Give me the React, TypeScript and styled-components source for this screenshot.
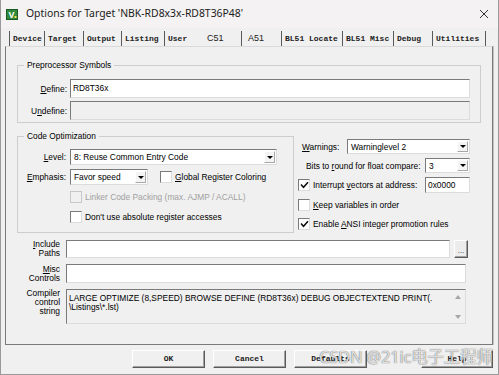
import React from 'react'
import styled, { createGlobalStyle } from 'styled-components'

const GlobalStyle = createGlobalStyle`
  html, body { margin: 0; padding: 0; background: #f0f0f0; }
  body { font-family: "Liberation Sans", Arial, sans-serif; color: #000; }
`

const Window = styled.div`
  position: relative;
  width: 499px;
  height: 375px;
  box-sizing: border-box;
  background: #f0f0f0;
  border-left: 1px solid #9a9a9a;
  border-right: 1px solid #9a9a9a;
  border-bottom: 1px solid #9a9a9a;
  display: flex;
  flex-direction: column;
  overflow: hidden;
`

const TitleBar = styled.div`
  height: 28px;
  flex-shrink: 0;
  display: flex;
  align-items: center;
  padding: 0 9px 0 5px;
  background: #f4f2f2;
  gap: 8px;
`

const TitleText = styled.span`
  flex: 1;
  font-family: "Noto Sans", "Liberation Sans", sans-serif;
  font-size: 10.4px;
  color: #1a1a1a;
  margin-top: -2px;
`

const TabStrip = styled.div`
  display: flex;
  height: 15px;
  margin-top: 3px;
  padding-left: 8px;
`

const Tab = styled.div<{ $w: number; $first?: boolean; $noEdge?: boolean; $plain?: boolean }>`
  width: ${p => p.$w}px;
  box-sizing: border-box;
  padding-left: ${p => (p.$plain ? 6 : 3)}px;
  border-left: ${p => (p.$first ? '1px solid #5a5a5a' : '0')};
  border-right: ${p => (p.$noEdge ? '0' : '1px solid #5a5a5a')};
  font-family: ${p => (p.$plain ? '"Liberation Sans", sans-serif' : '"Liberation Mono", monospace')};
  font-weight: ${p => (p.$plain ? 400 : 700)};
  font-size: ${p => (p.$plain ? '9px' : '8px')};
  line-height: 15px;
  color: #222;
  white-space: nowrap;
  overflow: hidden;
`

const Panel = styled.div`
  margin: 0 5px 0 4px;
  height: 299px;
  box-sizing: border-box;
  border: 1px solid #7a7a7a;
  border-top-color: #dadada;
  box-shadow: 1px 0 0 #c4c4c4;
  padding: 13px 11px 0 11px;
  display: flex;
  flex-direction: column;
`

const Group = styled.fieldset<{ $w?: number; $pad: string }>`
  margin: 0;
  min-width: 0;
  box-sizing: border-box;
  width: ${p => (p.$w ? `${p.$w}px` : 'auto')};
  border: 1px solid #cdcdcd;
  padding: ${p => p.$pad};
`

const Legend = styled.legend`
  margin-left: 6px;
  padding: 0 3px;
  font-size: 8.4px;
  line-height: 10px;
`

const FormGrid = styled.div<{ $cols: string; $gap: number; $rows?: string }>`
  display: grid;
  grid-template-columns: ${p => p.$cols};
  grid-auto-rows: ${p => p.$rows ?? 'auto'};
  column-gap: ${p => p.$gap}px;
  row-gap: ${p => p.$gap}px;
  align-items: center;
`

const Label = styled.span<{ $dim?: boolean; $indent?: number }>`
  font-size: 8.4px;
  line-height: 10px;
  text-align: right;
  white-space: nowrap;
  margin-left: ${p => p.$indent ?? 0}px;
  color: ${p => (p.$dim ? '#a0a0a0' : '#000')};
`

const StackLabel = styled.span<{ $top?: boolean }>`
  font-size: 8.4px;
  line-height: 9px;
  text-align: right;
  align-self: ${p => (p.$top ? 'start' : 'center')};
`

const U = styled.span`
  text-decoration: underline;
`

const Edit = styled.div<{ $h: number; $w?: number; $ro?: boolean }>`
  height: ${p => p.$h}px;
  width: ${p => (p.$w ? `${p.$w}px` : 'auto')};
  flex: ${p => (p.$w ? 'none' : '1')};
  box-sizing: border-box;
  background: ${p => (p.$ro ? '#f0f0f0' : '#fff')};
  border: 1px solid;
  border-color: #7a7a7a #dcdcdc #dcdcdc #7a7a7a;
  font-size: 8.4px;
  line-height: ${p => p.$h - 2}px;
  padding-left: 2px;
  white-space: nowrap;
  overflow: hidden;
`

const SelectBox = styled.div<{ $w: number; $h: number }>`
  width: ${p => p.$w}px;
  height: ${p => p.$h}px;
  box-sizing: border-box;
  display: flex;
  align-items: center;
  background: #fff;
  border: 1px solid;
  border-color: #7a7a7a #dcdcdc #dcdcdc #7a7a7a;
  font-size: 8.4px;
`

const SelectText = styled.span`
  flex: 1;
  padding-left: 3px;
  white-space: nowrap;
  overflow: hidden;
`

const DropBtn = styled.span`
  width: 11px;
  align-self: stretch;
  margin: 1px;
  box-sizing: border-box;
  background: #f4f4f4;
  border: 1px solid;
  border-color: #fff #a8a8a8 #a8a8a8 #fff;
  display: flex;
  align-items: center;
  justify-content: center;
  &::after {
    content: "";
    border-left: 3px solid transparent;
    border-right: 3px solid transparent;
    border-top: 3px solid #000;
  }
`

const CheckRow = styled.label`
  display: flex;
  align-items: center;
  gap: 3px;
`

const Box = styled.span<{ $dim?: boolean }>`
  width: 12px;
  height: 12px;
  box-sizing: border-box;
  flex-shrink: 0;
  background: ${p => (p.$dim ? '#f0f0f0' : '#fff')};
  border: 1px solid;
  border-color: ${p => (p.$dim ? '#c8c8c8' : '#7a7a7a #dcdcdc #dcdcdc #7a7a7a')};
  display: flex;
  align-items: center;
  justify-content: center;
`

const Row = styled.div<{ $gap: number; $mt?: number }>`
  display: flex;
  gap: ${p => p.$gap}px;
  margin-top: ${p => p.$mt ?? 0}px;
  align-items: flex-start;
`

const RightCol = styled.div`
  width: 172px;
  padding-top: 8px;
  display: flex;
  flex-direction: column;
  gap: 4px;
`

const RightRow = styled.div<{ $h: number }>`
  height: ${p => p.$h}px;
  display: flex;
  align-items: center;
  justify-content: space-between;
`

const Inline = styled.div<{ $gap: number }>`
  display: flex;
  align-items: center;
  gap: ${p => p.$gap}px;
`

const Section = styled.div`
  margin-top: 7px;
`

const DotsBtn = styled.div`
  width: 14px;
  height: 18px;
  margin: -1px -2px 0 0;
  box-sizing: border-box;
  background: #ececec;
  border: 1px solid;
  border-color: #fff #5a5a5a #5a5a5a #fff;
  box-shadow: inset -1px -1px 0 #a0a0a0;
  font-size: 8px;
  line-height: 20px;
  text-align: center;
  color: #333;
`

const ControlString = styled.div`
  height: 35px;
  box-sizing: border-box;
  display: flex;
  background: #f0f0f0;
  border: 1px solid;
  border-color: #7a7a7a #dcdcdc #dcdcdc #7a7a7a;
`

const ControlText = styled.div`
  flex: 1;
  padding: 4px 0 0 2px;
  font-size: 8.4px;
  line-height: 9px;
  white-space: pre;
  overflow: hidden;
`

const ScrollTrack = styled.div`
  width: 14px;
  display: flex;
  flex-direction: column;
  justify-content: space-between;
  align-items: center;
  padding: 5px 0 4px;
`

const Arrow = styled.span<{ $up?: boolean }>`
  border-left: 3px solid transparent;
  border-right: 3px solid transparent;
  ${p => (p.$up ? 'border-bottom: 4px solid #a6a6a6;' : 'border-top: 4px solid #a6a6a6;')}
`

const ButtonBar = styled.div`
  display: flex;
  gap: 8px;
  margin-top: 5px;
  padding: 0 5px 0 131px;
`

const DlgButton = styled.div<{ $push?: boolean; $w: number }>`
  width: ${p => p.$w}px;
  height: 18px;
  box-sizing: border-box;
  margin-left: ${p => (p.$push ? 'auto' : '0')};
  background: #f0f0f0;
  border: 1px solid;
  border-color: #fff #5a5a5a #5a5a5a #fff;
  box-shadow: inset -1px -1px 0 #a0a0a0;
  font-family: "Liberation Mono", monospace;
  font-weight: 700;
  font-size: 8px;
  line-height: 16px;
  text-align: center;
  color: #222;
`

const Watermark = styled.div`
  position: absolute;
  left: 318px;
  top: 346px;
  font-family: "Noto Sans", "Noto Sans CJK SC", sans-serif;
  font-size: 16.5px;
  line-height: 22px;
  color: rgba(255, 255, 255, 0.8);
  text-shadow: 0 0 1px rgba(60, 60, 60, 0.7), 0 0 1px rgba(60, 60, 60, 0.5);
  white-space: nowrap;
  letter-spacing: -0.2px;
`

const Check: React.FC<{ on?: boolean; dim?: boolean }> = ({ on, dim }) => (
  <Box $dim={dim}>
    {on && (
      <svg width="9" height="8" viewBox="0 0 9 8">
        <path d="M1 3.5 L3.5 6.2 L8 1.2" fill="none" stroke="#111" strokeWidth="1.6" />
      </svg>
    )}
  </Box>
)

const Select: React.FC<{ w: number; h: number; value: string }> = ({ w, h, value }) => (
  <SelectBox $w={w} $h={h}>
    <SelectText>{value}</SelectText>
    <DropBtn />
  </SelectBox>
)

const KeilIcon = () => (
  <svg width="12" height="11" viewBox="0 0 12 11">
    <rect x="0" y="0" width="12" height="11" fill="#2f8a3c" />
    <rect x="0.5" y="0.5" width="11" height="10" fill="none" stroke="#1c5a25" strokeWidth="1" />
    <text x="5.5" y="9" fontSize="9" fontWeight="700" fontFamily="Liberation Sans, sans-serif" fill="#fff" textAnchor="middle">V</text>
    <rect x="8.5" y="7" width="2" height="2" fill="#f2e35a" />
  </svg>
)

const CloseIcon = () => (
  <svg width="10" height="10" viewBox="0 0 10 10">
    <path d="M1 1 L9 9 M9 1 L1 9" stroke="#333" strokeWidth="1" fill="none" />
  </svg>
)

const tabs: { t: string; w: number; plain?: boolean; noEdge?: boolean }[] = [
  { t: 'Device', w: 36 },
  { t: 'Target', w: 39 },
  { t: 'Output', w: 38 },
  { t: 'Listing', w: 43 },
  { t: 'User', w: 36, noEdge: true },
  { t: 'C51', w: 41, plain: true },
  { t: 'A51', w: 40, plain: true },
  { t: 'BL51 Locate', w: 61 },
  { t: 'BL51 Misc', w: 51 },
  { t: 'Debug', w: 39 },
  { t: 'Utilities', w: 53 },
]

export default function App() {
  return (
    <>
      <GlobalStyle />
      <Window>
        <TitleBar>
          <KeilIcon />
          <TitleText>Options for Target 'NBK-RD8x3x-RD8T36P48'</TitleText>
          <CloseIcon />
        </TitleBar>

        <TabStrip>
          {tabs.map((tab, i) => (
            <Tab key={tab.t} $w={tab.w} $first={i === 0} $plain={tab.plain} $noEdge={tab.noEdge}>
              {tab.t}
            </Tab>
          ))}
        </TabStrip>

        <Panel>
          <Group $pad="9px 10px 2px 0">
            <Legend>Preprocessor Symbols</Legend>
            <FormGrid $cols="49px 1fr" $gap={3}>
              <Label><U>D</U>efine:</Label>
              <Edit $h={19}>RD8T36x</Edit>
              <Label>U<U>n</U>define:</Label>
              <Edit $h={19} $ro />
            </FormGrid>
          </Group>

          <Row $gap={4} $mt={8}>
            <Group $w={277} $pad="8px 0 7px 0">
              <Legend>Code Optimization</Legend>
              <FormGrid $cols="48px auto" $gap={4} $rows="16px">
                <Label><U>L</U>evel:</Label>
                <Select w={207} h={16} value="8: Reuse Common Entry Code" />
                <Label><U>E</U>mphasis:</Label>
                <Inline $gap={12}>
                  <Select w={78} h={16} value="Favor speed" />
                  <CheckRow>
                    <Check />
                    <Label><U>G</U>lobal Register Coloring</Label>
                  </CheckRow>
                </Inline>
                <span />
                <CheckRow>
                  <Check dim />
                  <Label $dim>Linker Code Packing (max. AJMP / ACALL)</Label>
                </CheckRow>
                <span />
                <CheckRow>
                  <Check />
                  <Label>Don't use absolute register accesses</Label>
                </CheckRow>
              </FormGrid>
            </Group>

            <RightCol>
              <RightRow $h={15}>
                <Label $indent={4}><U>W</U>arnings:</Label>
                <Select w={123} h={15} value="Warninglevel 2" />
              </RightRow>
              <RightRow $h={15}>
                <Label $indent={8}>Bits to <U>r</U>ound for float compare:</Label>
                <Select w={45} h={15} value="3" />
              </RightRow>
              <RightRow $h={16}>
                <CheckRow>
                  <Check on />
                  <Label>Interrupt <U>v</U>ectors at address:</Label>
                </CheckRow>
                <Edit $h={16} $w={45}>0x0000</Edit>
              </RightRow>
              <RightRow $h={15}>
                <CheckRow>
                  <Check />
                  <Label><U>K</U>eep variables in order</Label>
                </CheckRow>
              </RightRow>
              <RightRow $h={15}>
                <CheckRow>
                  <Check on />
                  <Label>Enable <U>A</U>NSI integer promotion rules</Label>
                </CheckRow>
              </RightRow>
            </RightCol>
          </Row>

          <Section>
            <FormGrid $cols="43px 400px" $gap={6}>
              <StackLabel><U>I</U>nclude<br />Paths</StackLabel>
              <Inline $gap={4}>
                <Edit $h={18} />
                <DotsBtn>...</DotsBtn>
              </Inline>
              <StackLabel><U>M</U>isc<br />Controls</StackLabel>
              <Edit $h={19} />
              <StackLabel $top>Compiler<br />control<br />string</StackLabel>
              <ControlString>
                <ControlText>
                  {'LARGE OPTIMIZE (8,SPEED) BROWSE DEFINE (RD8T36x) DEBUG OBJECTEXTEND PRINT(.\n\\Listings\\*.lst)'}
                </ControlText>
                <ScrollTrack>
                  <Arrow $up />
                  <Arrow />
                </ScrollTrack>
              </ControlString>
            </FormGrid>
          </Section>
        </Panel>

        <ButtonBar>
          <DlgButton $w={73}>OK</DlgButton>
          <DlgButton $w={73}>Cancel</DlgButton>
          <DlgButton $w={73}>Defaults</DlgButton>
          <DlgButton $w={72} $push>Help</DlgButton>
        </ButtonBar>

        <Watermark>CSDN @21ic电子工程师</Watermark>
      </Window>
    </>
  )
}
